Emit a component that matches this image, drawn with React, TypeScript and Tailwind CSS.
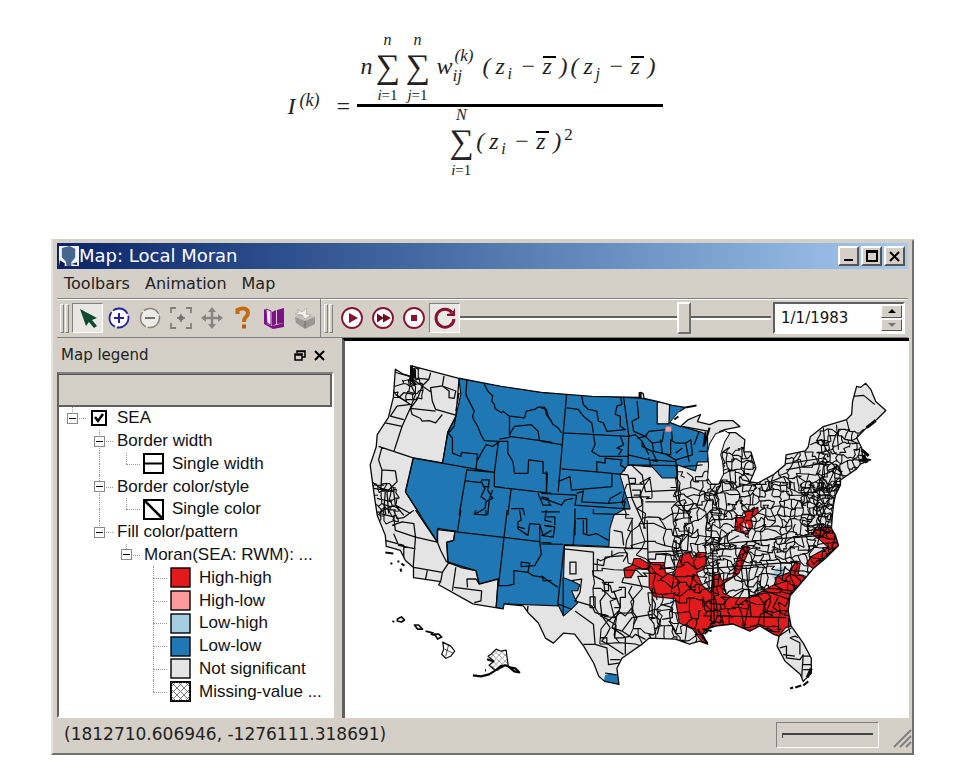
import React, { useState } from "react";

const SANS = "font-['DejaVu_Sans',Verdana,sans-serif]";

/* ---------- Formula ---------- */

function Sum({ over, under }: { over: string; under: React.ReactNode }) {
  return (
    <span className="flex w-[30px] flex-col items-center">
      <span className="h-4 text-[16px] leading-4 italic">{over}</span>
      <span className="h-[38px] text-[34px] leading-[38px]">∑</span>
      <span className="h-[18px] text-[15px] leading-[18px] whitespace-nowrap">{under}</span>
    </span>
  );
}

function Difference({ sub }: { sub: string }) {
  return (
    <span className="flex italic">
      <span className="w-[13px]">(</span>
      <span className="w-3">z</span>
      <span className="w-[14px] pt-2 text-[16px]">{sub}</span>
      <span className="w-[21px] not-italic">−</span>
      <span className="w-[17px]">
        <span className="inline-block h-5 w-[13px] border-t-2 border-black leading-4">z</span>
      </span>
      <span className="w-[11px]">)</span>
    </span>
  );
}

function Formula() {
  return (
    <section
      aria-label="Local Moran statistic"
      className="flex items-center justify-center pt-8 pr-1 font-['Liberation_Serif','Times_New_Roman',serif] text-[24px] leading-8 text-[#222]"
    >
      <span className="flex w-[49px] italic">
        I<sup className="top-0 pl-1 text-[18px] leading-5">(k)</sup>
      </span>
      <span className="w-5">=</span>
      <div className="flex flex-col items-center">
        <div className="flex px-1">
          <span className="w-[12px] pt-[18px] italic">n</span>
          <Sum over="n" under={<><i>i</i>=1</>} />
          <Sum over="n" under={<><i>j</i>=1</>} />
          <span className="flex w-[50px] pt-[18px] pl-1 italic">
            w
            <span className="flex flex-col text-[17px]">
              <span className="h-4 pl-[2px] leading-3">(k)</span>
              <span className="h-4 leading-5">ij</span>
            </span>
          </span>
          <span className="flex pt-[18px]">
            <Difference sub="i" />
            <Difference sub="j" />
          </span>
        </div>
        <div className="h-[3px] w-full bg-black" />
        <div className="flex">
          <Sum over="N" under={<><i>i</i>=1</>} />
          <span className="flex pt-[18px]">
            <Difference sub="i" />
            <span className="text-[17px] leading-5">2</span>
          </span>
        </div>
      </div>
    </section>
  );
}

/* ---------- Map ---------- */

const LAND =
  "M395 370L403 375L410 377L412 367L458 379L500 387L540 393L590 397L638 398L638 393L641 394L642 399L655 402L670 406L683 408L675 414L668 423L678 427L686 420L698 415L695 422L707 425L716 421L730 421L737 427L722 430L717 432L723 433L733 433L742 440L741 452L748 452L753 468L747 482L755 483L770 475L782 465L783 455L802 451L805 447L807 437L820 427L843 420L848 415L849 402L853 387L857 388L862 384L867 390L872 402L882 411L873 420L863 428L853 438L858 448L859 458L867 460L857 464L853 469L837 480L837 485L832 495L830 505L829 515L828 528L832 535L835 545L822 558L810 568L800 580L787 595L785 610L788 625L800 642L808 657L808 672L800 680L797 673L782 660L774 645L776 635L770 633L757 625L747 630L730 623L713 625L704 628L700 633L705 643L697 640L687 643L673 638L647 637L640 643L620 657L615 667L617 683L603 680L597 675L592 662L582 645L573 633L562 632L552 642L544 637L537 622L527 612L522 605L503 603L502 608L472 603L438 584L440 581L413 577L413 567L405 560L400 550L386 546L385 535L377 515L374 495L370 465L376 447L377 435L388 418L393 398Z";

const LOW_LOW =
  "M458 379L540 393L640 399L683 408L668 423L680 427L700 433L705 438L705 462L695 462L693 471L675 465L675 478L660 478L650 467L626 465L618 475L623 492L628 508L622 509L612 515L608 528L607 546L563 544L562 577L570 580L578 584L576 590L570 590L573 597L576 602L570 608L562 615L557 605L503 603L502 608L495 607L497 578L478 583L475 570L460 567L447 562L446 542L453 540L454 531L437 528L437 542L405 492L413 458L442 463L447 432L455 417L460 395Z";

const HIGH_HIGH = [
  "M622 568L630 565L632 558L638 558L646 563L646 569L634 568L629 577L623 577Z",
  "M647 562L662 562L663 572L672 575L673 570L678 555L687 552L690 558L695 552L703 552L704 562L701 569L694 572L700 585L708 592L711 575L717 573L719 580L730 576L732 568L735 557L740 545L747 547L743 557L736 573L722 582L720 592L730 597L747 597L760 590L773 583L772 577L786 572L792 562L797 563L795 573L802 577L787 595L785 610L788 625L782 627L776 635L770 633L757 625L747 630L730 623L713 625L704 628L700 633L705 643L699 640L690 628L677 622L675 610L673 598L652 596L647 587Z",
  "M808 533L817 527L827 527L832 535L835 545L822 556L810 568L803 563L808 556L815 552L825 547L817 540Z",
  "M732 530L733 518L743 516L742 512L755 507L755 513L748 518L750 526L744 534Z",
];

/* Each sheet is drafted at three times the size of the map canvas. */
const SHEETS: { at: string; d: string }[] = [
  {
    at: "translate(360 345) scale(.33333)",
    d: "M318 108L315 150L322 165L340 200L335 215L338 225L350 245L360 270L370 288L412 290M370 120L380 140L395 155L392 170L400 180L402 192L420 205L425 200L445 215L490 220L495 200L520 195L530 188L550 188L555 210L570 230M445 215V275L570 292M415 283L445 278M412 290L400 382L315 375M412 290L440 290V325L455 350L460 385H500L502 345L545 350V385H558L555 440M445 270L460 245L510 240L530 260L535 290M295 102L285 215L280 245L268 260L262 265L275 280V325L300 335L302 323L350 328L345 375M350 345L375 300L395 305L415 290M400 382V425L570 445M158 340L400 382M318 375L295 510M315 408L360 413L362 405H385L380 435L395 460L375 470L372 490L345 505M400 425L430 428M395 435L385 460L380 510M450 430L440 510M450 490H485L490 510M530 445L545 480H570M540 455L560 460L565 480M362 412L372 430L360 455L375 465M365 425H385M285 215L262 262L245 355M158 340L135 440L180 510M155 68L150 120L165 150L150 190L125 245L75 235M185 125L150 100L205 105L210 85M250 95L245 125L210 130L215 170L225 195L285 212M245 125L265 140V160L280 162L285 140L245 125M150 192L225 200M185 125L170 165L150 192L155 210L180 222L185 230L205 228L225 235L245 210M205 105L185 125L210 142M125 245L100 322M55 305L160 340M105 150L150 180L110 185L90 215L130 225M115 160L130 145L160 150M65 308L55 345L65 375L105 378L110 410L85 435L62 430L65 375M40 430L100 440L105 480L150 505M50 460L95 470M75 440L70 505M100 480L60 500M35 410L62 430M80 440L85 505M105 480L130 510M295 145L285 200",
  },
  {
    at: "translate(360 510) scale(.33333)",
    d: "M60 10L100 20L105 60L165 80L230 95M165 80L158 170M100 0L110 25L130 22L160 0M95 45L125 35L160 40L165 80M100 70L115 105L165 115M75 90L130 105V145M160 170L245 185L240 212M200 180L195 205M245 185L265 155M285 170L275 240M280 230L362 240L360 270L340 275M320 230L318 205H345L355 220L412 205L405 292M165 0L230 95L240 120L258 155M230 95V58L283 62L278 90L258 95L262 155L345 180L355 220M230 58L570 98M300 0L290 62M438 0L412 225L440 225L458 220V180L500 185L515 195L545 200V210H570M535 95L540 130L520 165L480 168V155L505 158L500 185M345 0L340 12L375 15V0M475 0L480 30L470 35V55L500 75L505 40L535 42L545 75L570 60M470 50L490 55M535 42V95M500 285L498 305M555 0L550 30L570 35M548 45L570 50",
  },
  {
    at: "translate(540 365) scale(.33333)",
    d: "M0 130L15 135L20 155L35 180L50 190L60 205M75 90L50 380M0 230L60 240M65 205L258 215M120 95L125 120L140 135L165 140L170 170L185 175L195 200L250 195L235 185V155L220 150L225 125L240 120L235 95M75 130L110 135L125 155L150 175L155 205M245 100L260 210L258 300M155 210L160 240L150 260L175 275H258M235 215L245 240L225 250L240 255L230 270M60 312L155 320L258 330M165 320V290L190 295V280L240 285L235 300L250 310L245 320M50 350L85 335L90 375L210 365V325M0 385L105 390L100 420L265 432M105 385L125 378L120 410L200 415L205 400L240 380M155 432V445L262 448M100 430V510M0 400L20 405L60 420L70 405L95 400M0 440H55M105 460H135V505M15 320V385M15 455H40V480M285 110L290 160L270 170L275 200L310 215L320 200L370 195M345 110V178H380L382 120M260 215L280 210L300 230V245L330 260L345 290L258 270M285 220L310 215L330 235L360 230L365 200M330 235L335 260L370 268L400 285M355 225L360 265L385 270V225L400 235L430 235L445 225L450 270L400 285L405 340M388 200L390 225M455 240L470 200M470 260H495M430 235L440 290M300 230L320 270M400 265L420 250M258 300L405 302M330 285L400 290M320 278L325 300M258 330L270 400L310 490M310 410H400M200 415L250 410L245 430M370 185V195M268 300L300 330L310 380L400 375M420 185L500 200M420 305L480 300M405 340L410 410L440 450M262 340H280V355H265M270 375H295V390H275M295 380L300 420L285 430L310 445L305 490",
  },
  {
    at: "translate(540 520) scale(.33333)",
    d: "M100 0L95 75M0 70L65 72M68 75L48 255M68 75L318 85M0 45L35 50L40 20L10 15M125 0V40L140 45L165 40L200 60M0 165L20 180L50 200M270 0V85M315 0L318 130M215 30L240 35L245 75M68 85L155 95V165L185 180L190 220L175 240L180 285L205 320M85 125h18v35h-18zM90 180L120 175L115 215L100 240L150 255L160 275L200 285M145 228h15v32h-15zM155 130L185 135L190 110L245 105M210 90V110M245 170L240 185L320 200M180 185L205 195L210 215L240 205M215 210L235 260L210 320L240 330L270 290L330 280M230 200h20v30h-15v30h-18M270 195L260 215L275 240L270 270L285 290L275 310M330 200V290M340 100L400 105M400 60L405 110M440 20L435 90L318 95M510 145L505 300M100 270L155 310L160 370H125M160 370L195 380L200 430L235 425M205 320L195 340L180 360L200 370L245 400M210 320L240 340L250 350V400M240 330L270 350L280 340L310 355M330 230L340 250L335 280L355 300L345 340M355 250L390 260V290L360 295M380 300L400 330M65 172V285M190 455L235 462M50 250L90 265M180 185H215M200 185V210H180M200 300L230 270L250 285L270 260M175 350H195V370M205 415H235",
  },
  {
    at: "translate(700 520) scale(.33333)",
    d: "M0 75L230 55L360 45M0 145L200 130L285 125M30 90L35 310M130 140L145 290M55 285L250 290M140 225L200 215L270 240M230 380L250 375V410L290 415L300 400M260 350L290 365V400M290 345L320 400M300 405h25M300 430h25M300 445h25M300 400L295 475M228 345L265 320M240 400L275 405M260 350L275 345L285 350M190 240L180 270L210 285M225 230L210 260L240 280M60 285L50 310M80 285V310M40 285H80V310",
  },
];

function seeded(seed: number) {
  let s = seed;
  return () => {
    s = (s * 16807) % 2147483647;
    return s / 2147483647;
  };
}

/* Irregular county lines: a jittered grid whose edges take crooked steps. */
function countyMesh(x0: number, y0: number, x1: number, y1: number, step: number, seed: number) {
  const rnd = seeded(seed * 7919);
  const cols = Math.ceil((x1 - x0) / step) + 1;
  const rows = Math.ceil((y1 - y0) / step) + 1;
  const pts: number[][][] = [];
  for (let r = 0; r < rows; r++) {
    pts.push([]);
    for (let c = 0; c < cols; c++) {
      pts[r].push([
        x0 + (c + (rnd() - 0.5) * 1.1) * step,
        y0 + (r + (rnd() - 0.5) * 1.1) * step,
      ]);
    }
  }
  let d = "";
  const edge = (a: number[], b: number[]) => {
    if (rnd() < 0.17) return;
    const t = 0.25 + rnd() * 0.5;
    const j = () => (rnd() - 0.5) * step * 0.5;
    const mx = a[0] + (b[0] - a[0]) * t;
    const my = a[1] + (b[1] - a[1]) * t;
    const bent = `L${(mx + j()).toFixed(1)} ${(my + j()).toFixed(1)}`;
    const mid = rnd() < 0.5 ? `L${(mx + j()).toFixed(1)} ${a[1].toFixed(1)}${bent}` : bent;
    d += `M${a[0].toFixed(1)} ${a[1].toFixed(1)}${mid}L${b[0].toFixed(1)} ${b[1].toFixed(1)}`;
  };
  for (let r = 0; r < rows; r++) {
    for (let c = 0; c < cols; c++) {
      if (c + 1 < cols) edge(pts[r][c], pts[r][c + 1]);
      if (r + 1 < rows) edge(pts[r][c], pts[r + 1][c]);
    }
  }
  return d;
}

const MESHES = [
  countyMesh(704, 484, 850, 548, 6, 11),
  countyMesh(720, 450, 756, 484, 6, 23),
  countyMesh(756, 456, 832, 484, 8, 31),
  countyMesh(814, 432, 868, 482, 6, 47),
  countyMesh(800, 484, 840, 530, 5, 53),
  countyMesh(674, 474, 710, 550, 7, 59),
  countyMesh(626, 484, 676, 555, 15, 61),
  countyMesh(704, 548, 834, 590, 7, 71),
  countyMesh(650, 556, 706, 640, 9, 83),
  countyMesh(706, 592, 786, 632, 10, 97),
  countyMesh(600, 560, 646, 640, 17, 101),
  countyMesh(392, 372, 414, 400, 7, 113),
  countyMesh(372, 486, 394, 520, 6, 127),
];

function MoranMap() {
  return (
    <svg
      role="img"
      aria-label="Local Moran clusters by state economic area"
      viewBox="345 342 560 374"
      className="block w-full"
      fill="none"
      stroke="#0a0a0a"
      strokeLinejoin="round"
    >
      <defs>
        <clipPath id="land"><path d={LAND} /></clipPath>
        <pattern id="hatch" width="6" height="6" patternUnits="userSpaceOnUse">
          <path d="M0 0L6 6M6 0L0 6" stroke="#777" strokeWidth="0.7" />
        </pattern>
      </defs>
      <path d={LAND} fill="#e4e4e4" stroke="none" />
      <g clipPath="url(#land)" stroke="none">
        <path d={LOW_LOW} fill="#1f78b4" />
        <path d="M655 403H667V424H655Z" fill="#e4e4e4" />
        <path d="M603 674L609 672L617 675L618 684L602 681Z" fill="#1f78b4" />
        {HIGH_HIGH.map((d) => <path key={d} d={d} fill="#e31a1c" />)}
        <path d="M667 599h5v6h-3z" fill="#a6cee3" />
        <path d="M768 574L775 567L784 566L779 575L770 578Z" fill="#a6cee3" />
        <path d="M740 523l5 1l1 7l-5 1z" fill="#e4e4e4" />
      </g>
      <g clipPath="url(#land)" strokeWidth="1.1">
        {MESHES.map((d) => <path key={d.slice(0, 24)} d={d} />)}
        <path d={LOW_LOW} />
        {HIGH_HIGH.map((d) => <path key={d} d={d} />)}
        <path d="M849 397L860 396L871 405M843 420L846 432M820 428L822 452M833 425L835 450M807 445L818 440L824 452M782 464L822 458M783 470L826 462" />
        {SHEETS.map((s) => <path key={s.at} d={s.d} transform={s.at} strokeWidth="3.8" />)}
      </g>
      <path d="M663 427h6v5h-6z" fill="#fb9a99" stroke="none" />
      <path d={LAND} strokeWidth="1.3" />
      <path d="M722 431L713 434L707 444L705 452L706 465L705 478L709 484L716 484L721 474L720 462L718 455L722 442L727 434Z" fill="#fff" />
      <path d="M668 423L676 413L694 406L690 411L683 416L677 420Z" fill="#fff" stroke="none" />
      <path d="M683 408L694 406M672 420l4-3M703 432l-2 15M707 428l-5 17" strokeWidth="2" />
      <path d="M411 366v16M410 378l5 8M414 370v9M638 393v6M855 461l8-2M860 455l3 8M858 450l7 6M863 428l9-7M804 676l4-9" strokeWidth="3" />
      <path d="M695 628l6 10M705 630l-3 3M700 636l5 6M700 628l9 2" strokeWidth="2" />
      <path d="M787 687l3-1M792 686l6-2M800 684l5-4M385 552l8 1M390 563h2M397 561h2M401 563l3 2M400 568l1 3" strokeWidth="2" />
      <g strokeWidth="1.2">
        <path d="M392 620l2 1M397 618l4-2l3 3l-3 2l-4-1zM414 624l4 0l4 4l-5 0zM425 630l8 2M430 633l4 1M434 633l4 0l3 3l-4 2z" strokeWidth="1.7" />
        <path d="M442 641L450 645L454 650L450 655L445 657L441 653L443 648Z" fill="#fff" />
        <path d="M444 648l8 4M448 643l-3 12" strokeWidth="0.7" />
        <path d="M490 653L495 648L500 650L505 649L507 664L500 664L494 669L488 664L493 660L487 655Z" fill="url(#hatch)" />
        <path d="M472 674l8 1l8-2l8-5l8-4l5 2l5 1l4 4l-5-1l-6-5M486 658l6 2M484 669h1M496 669l4-4" strokeWidth="2.2" />
      </g>
    </svg>
  );
}

/* ---------- Tree ---------- */

type Guide = "none" | "line" | "tee" | "end" | "box" | "boxTop" | "boxFull";

function GuideCell({ kind }: { kind: Guide }) {
  const toTop = kind !== "none" && kind !== "box";
  const toBottom = kind === "line" || kind === "tee" || kind === "boxFull";
  const isBox = kind.startsWith("box");
  return (
    <span className="relative w-[27px] shrink-0 self-stretch">
      {toTop && <span className="absolute top-0 left-[13px] h-1/2 border-l border-dotted border-[#999]" />}
      {toBottom && <span className="absolute bottom-0 left-[13px] h-1/2 border-l border-dotted border-[#999]" />}
      {kind !== "none" && kind !== "line" && (
        <span className="absolute top-1/2 right-0 left-[13px] border-t border-dotted border-[#999]" />
      )}
      {isBox && (
        <button
          type="button"
          aria-label="Collapse"
          className="absolute inset-0 m-auto flex size-[11px] items-center justify-center border border-[#888] bg-white"
        >
          <span className="h-px w-[7px] bg-black" />
        </button>
      )}
    </span>
  );
}

function Swatch({ kind }: { kind: string }) {
  return (
    <svg viewBox="0 0 21 21" className="size-[21px] shrink-0" stroke="#000">
      <rect x="1" y="1" width="19" height="19" fill={kind.startsWith("#") ? kind : "#fff"} strokeWidth={kind.startsWith("#") ? 1.4 : 2} />
      {kind === "width" && <path d="M1 10.500H20" strokeWidth="2" />}
      {kind === "color" && <path d="M2 2L19 19" strokeWidth="2.500" />}
      {kind === "missing" && <path d="M1 6L6 1M1 13L13 1M1 20L20 1M8 20L20 8M15 20L20 15M1 15L6 20M1 8L13 20M1 1L20 20M8 1L20 13M15 1L20 6" strokeWidth="0.8" stroke="#555" />}
    </svg>
  );
}

const ROWS: { guides: Guide[]; swatch?: string; label: string }[] = [
  { guides: ["none", "boxFull"], label: "Border width" },
  { guides: ["none", "line", "end"], swatch: "width", label: "Single width" },
  { guides: ["none", "boxFull"], label: "Border color/style" },
  { guides: ["none", "line", "end"], swatch: "color", label: "Single color" },
  { guides: ["none", "boxTop"], label: "Fill color/pattern" },
  { guides: ["none", "none", "boxTop"], label: "Moran(SEA: RWM): ..." },
  { guides: ["none", "none", "none", "tee"], swatch: "#e31a1c", label: "High-high" },
  { guides: ["none", "none", "none", "tee"], swatch: "#fb9a99", label: "High-low" },
  { guides: ["none", "none", "none", "tee"], swatch: "#a6cee3", label: "Low-high" },
  { guides: ["none", "none", "none", "tee"], swatch: "#1f78b4", label: "Low-low" },
  { guides: ["none", "none", "none", "tee"], swatch: "#e4e4e4", label: "Not significant" },
  { guides: ["none", "none", "none", "end"], swatch: "missing", label: "Missing-value ..." },
];

function LegendTree() {
  return (
    <ul className="flex h-[296px] flex-col font-['Liberation_Sans',Arial,sans-serif] text-[17px] leading-5 whitespace-nowrap text-[#111]">
      <li className="flex flex-1 items-center">
        <GuideCell kind="boxTop" />
        <label className="flex items-center gap-[10px] pl-[5px]">
          <input
            type="checkbox"
            defaultChecked
            className="peer size-4 appearance-none border-2 border-black bg-white"
          />
          <svg viewBox="0 0 16 16" className="pointer-events-none -ml-[26px] hidden size-4 peer-checked:block" fill="none" stroke="#000" strokeWidth="2.500">
            <path d="M4 7L7 11L12 4" />
          </svg>
          SEA
        </label>
      </li>
      {ROWS.map((row) => (
        <li key={row.label} className="flex flex-1 items-center">
          {row.guides.map((g, i) => <GuideCell key={i} kind={g} />)}
          {row.swatch ? (
            <span className="flex items-center gap-2 pl-[3px]"><Swatch kind={row.swatch} />{row.label}</span>
          ) : (
            <span className="pl-1">{row.label}</span>
          )}
        </li>
      ))}
    </ul>
  );
}

/* ---------- Toolbar ---------- */

function Grip() {
  return (
    <span className="flex gap-px px-[3px]" aria-hidden="true">
      <span className="h-[29px] w-1 border border-t-white border-r-[#808080] border-b-[#808080] border-l-white" />
      <span className="h-[29px] w-1 border border-t-white border-r-[#808080] border-b-[#808080] border-l-white" />
    </span>
  );
}

function Tool({ label, pressed = false, children }: { label: string; pressed?: boolean; children: React.ReactNode }) {
  return (
    <button
      type="button"
      aria-label={label}
      aria-pressed={pressed}
      className="flex h-[30px] w-[31px] shrink-0 items-center justify-center border border-transparent aria-pressed:border-t-[#808080] aria-pressed:border-r-white aria-pressed:border-b-white aria-pressed:border-l-[#808080] aria-pressed:bg-[#eae8e4]"
    >
      <svg viewBox="0 0 24 24" className="size-6" fill="none">{children}</svg>
    </button>
  );
}

const CRIMSON = "#86122f";

function Toolbar() {
  const [frame, setFrame] = useState(73);
  return (
    <div className="flex h-[40px] items-center border-t border-b border-t-[#808080] border-b-[#808080] shadow-[inset_0_1px_0_#fff]">
      <Grip />
      <Tool label="Select" pressed>
        <path d="M4 3L21 12L16 14L21 20L18 22L13 16L10 20Z" fill="#0d4a30" />
      </Tool>
      <Tool label="Zoom in">
        <circle cx="12" cy="12" r="9.500" fill="#fff" stroke="#23239a" strokeWidth="1.800" strokeDasharray="17 2" />
        <path d="M12 7V17M7 12H17" stroke="#23239a" strokeWidth="2" />
      </Tool>
      <Tool label="Zoom out">
        <circle cx="12" cy="12" r="9.500" fill="#eeece8" stroke="#88847c" strokeWidth="1.500" strokeDasharray="17 2" />
        <path d="M7 12H17" stroke="#77736c" strokeWidth="2" />
      </Tool>
      <Tool label="Zoom to extent">
        <path d="M2 7V2H7M17 2H22V7M22 17V22H17M7 22H2V17M12 8V16M8 12H16" stroke="#86827b" strokeWidth="1.800" />
        <circle cx="12" cy="12" r="2.500" fill="#77736c" />
      </Tool>
      <Tool label="Pan">
        <path d="M12 3V21M3 12H21" stroke="#8a867f" strokeWidth="2.400" />
        <path d="M12 1L16 6H8ZM12 23L8 18H16ZM1 12L6 8V16ZM23 12L18 16V8Z" fill="#8a867f" />
      </Tool>
      <Tool label="Help">
        <path d="M6.500 8V4Q9 2.500 12 2.500Q17 2.500 17 7Q17 9.500 14.500 11.500Q13 13 13 16" stroke="#c46a10" strokeWidth="4" />
        <path d="M11 18.500h4v4h-4z" fill="#b85c08" />
      </Tool>
      <Tool label="Legend book">
        <path d="M2 3L5 5V18L10 20L22 17V21L11 23L2 18Z" fill="#7a1286" />
        <path d="M4 3L9 5V19L5 17Z" fill="#f3e8f5" stroke="#7a1286" />
        <path d="M10 6L14 4V18L10 20ZM15 4L22 2V17L15 18Z" fill="#7a1286" />
      </Tool>
      <Tool label="Export">
        <path d="M2 11L11 7L22 11V18L12 23L3 17Z" fill="#9b9791" />
        <path d="M2 11L12 15L22 11L13 8Z" fill="#c6c2bb" />
        <path d="M4 3L9 6L14 2L13 8L18 9L12 13L9 9L2 8L6 6Z" fill="#f4f3f0" stroke="#aaa69f" strokeWidth="0.700" />
        <path d="M12 15V22" stroke="#6e6a64" />
      </Tool>
      <span className="h-[38px] w-px bg-[#808080]" />
      <Grip />
      <Tool label="Play">
        <circle cx="12" cy="12" r="10" fill="#fff" stroke={CRIMSON} strokeWidth="1.800" />
        <path d="M9 7L18 12L9 17Z" fill={CRIMSON} />
      </Tool>
      <Tool label="Fast forward">
        <circle cx="12" cy="12" r="10" fill="#fff" stroke={CRIMSON} strokeWidth="1.800" />
        <path d="M6 7.500L13 12L6 16.500ZM12 7.500L20 12L12 16.500Z" fill="#701020" />
      </Tool>
      <Tool label="Stop">
        <circle cx="12" cy="12" r="10" fill="#fff" stroke={CRIMSON} strokeWidth="1.800" />
        <path d="M9 9h6v6H9z" fill={CRIMSON} />
      </Tool>
      <Tool label="Loop" pressed>
        <path d="M19 6.500A9 9 0 1 0 21 13" stroke={CRIMSON} strokeWidth="3" />
        <path d="M22 2V10H14V8L19 7Z" fill={CRIMSON} />
      </Tool>
      <input
        type="range"
        aria-label="Animation time"
        value={frame}
        onChange={(e) => setFrame(Number(e.target.value))}
        className="h-8 min-w-0 flex-1 appearance-none bg-transparent [&::-webkit-slider-runnable-track]:h-1 [&::-webkit-slider-runnable-track]:border-t-2 [&::-webkit-slider-runnable-track]:border-b-2 [&::-webkit-slider-runnable-track]:border-t-[#606060] [&::-webkit-slider-runnable-track]:border-b-white [&::-webkit-slider-thumb]:-mt-[16px] [&::-webkit-slider-thumb]:h-8 [&::-webkit-slider-thumb]:w-[14px] [&::-webkit-slider-thumb]:appearance-none [&::-webkit-slider-thumb]:border-2 [&::-webkit-slider-thumb]:border-t-white [&::-webkit-slider-thumb]:border-r-[#707070] [&::-webkit-slider-thumb]:border-b-[#707070] [&::-webkit-slider-thumb]:border-l-white [&::-webkit-slider-thumb]:bg-[#d4d0c8]"
      />
      <div className="mr-[3px] ml-[2px] flex h-8 w-[132px] border-2 border-t-[#606060] border-r-white border-b-white border-l-[#606060] bg-white">
        <input
          aria-label="Date"
          defaultValue="1/1/1983"
          className="min-w-0 flex-1 bg-white pl-[6px] text-[15px] text-[#111] outline-none"
        />
        <div className="flex w-[22px] flex-col gap-px py-px pr-px">
          {["Later", "Earlier"].map((name) => (
            <button
              key={name}
              type="button"
              aria-label={name}
              className="flex flex-1 items-center justify-center border border-t-white border-r-[#555] border-b-[#555] border-l-white bg-[#d4d0c8]"
            >
              <svg viewBox="0 0 8 4" className="h-1 w-2" fill={name === "Later" ? "#000" : "#777"}>
                <path d={name === "Later" ? "M0 4L4 0L8 4Z" : "M0 0L4 4L8 0Z"} />
              </svg>
            </button>
          ))}
        </div>
      </div>
    </div>
  );
}

/* ---------- Window ---------- */

function CaptionButton({ label, d }: { label: string; d: string }) {
  return (
    <button
      type="button"
      aria-label={label}
      className="flex h-5 w-[21px] items-center justify-center border-2 border-t-white border-r-[#555] border-b-[#555] border-l-white bg-[#d4d0c8]"
    >
      <svg viewBox="0 0 14 14" className="size-[14px]" fill="none" stroke="#000" strokeWidth="2"><path d={d} /></svg>
    </button>
  );
}

export default function App() {
  return (
    <main className="min-h-screen bg-white pb-3">
      <Formula />
      <section
        aria-label="Map: Local Moran"
        className={`mt-[60px] mr-[40px] ml-[51px] border-2 border-t-[#d4d0c8] border-r-[#707070] border-b-[#707070] border-l-[#e4e1dc] bg-[#d4d0c8] ${SANS}`}
      >
        <div className="px-1 pt-[2px]">
          <header className="flex h-[26px] items-center bg-linear-to-r from-[#0a246a] to-[#a6caf0] pr-[3px] pl-[2px]">
            <svg viewBox="0 0 21 21" className="size-[20px]">
              <rect width="21" height="21" fill="#f4f6fa" />
              <path d="M3 2L11 0L17 3V12L13 17V21H8L7 16L3 12Z" fill="#46658f" />
              <path d="M1 15L6 18V21H0ZM13 19L19 17V20Z" fill="#111c44" />
            </svg>
            <h1 className="flex-1 text-[18px] leading-6 text-white">Map: Local Moran</h1>
            <div className="flex gap-[2px]">
              <CaptionButton label="Minimize" d="M2 11H11" />
              <CaptionButton label="Maximize" d="M2 2H12V12H2ZM2 3H12" />
              <CaptionButton label="Close" d="M2 3L11 12M11 3L2 12" />
            </div>
          </header>
          <nav className="flex h-[29px] items-center gap-[15px] pl-[7px] text-[16px] text-[#222]">
            <button type="button">Toolbars</button>
            <button type="button">Animation</button>
            <button type="button">Map</button>
          </nav>
          <Toolbar />
        </div>
        <div className="flex pr-[3px] pl-1">
          <aside className="flex w-[277px] shrink-0 flex-col">
            <div className="flex h-[34px] items-center justify-between pr-2 pl-[4px]">
              <h2 className="text-[15px] text-[#222]">Map legend</h2>
              <div className="flex gap-[7px]">
                <button type="button" aria-label="Float">
                  <svg viewBox="0 0 13 13" className="size-[13px]" fill="none" stroke="#000" strokeWidth="1.500">
                    <path d="M4 4V2H12V8H9M4 2.500H12M2 5H9V11H2ZM2 6H9" />
                  </svg>
                </button>
                <button type="button" aria-label="Close legend">
                  <svg viewBox="0 0 13 13" className="size-[13px]" fill="none" stroke="#000" strokeWidth="2">
                    <path d="M2 2L11 11M11 2L2 11" />
                  </svg>
                </button>
              </div>
            </div>
            <div className="flex-1 border-2 border-t-[#808080] border-r-white border-b-white border-l-[#606060] bg-white">
              <div className="h-[33px] border-t border-r-2 border-b-2 border-t-[#505050] border-r-[#606060] border-b-[#606060] bg-[#d4d0c8]" />
              <LegendTree />
            </div>
          </aside>
          <div className="ml-2 min-w-0 flex-1 border-t-[3px] border-l-[3px] border-t-black border-l-[#606060] bg-white">
            <MoranMap />
          </div>
        </div>
        <footer className="flex h-[35px] items-center justify-between pl-[11px] text-[17px] text-[#222]">
          <output>(1812710.606946, -1276111.318691)</output>
          <div className="flex items-end">
            <div className="flex h-[26px] w-[103px] items-center border border-t-[#808080] border-r-white border-b-white border-l-[#808080] px-[5px]">
              <div className="h-[5px] w-full border-t-2 border-l border-t-[#444] border-l-[#444]" />
            </div>
            <svg viewBox="0 0 20 20" className="ml-[13px] size-5" stroke="#808080" strokeWidth="2">
              <path d="M2 19L19 2M8 19L19 8M14 19L19 14" />
            </svg>
          </div>
        </footer>
      </section>
    </main>
  );
}
